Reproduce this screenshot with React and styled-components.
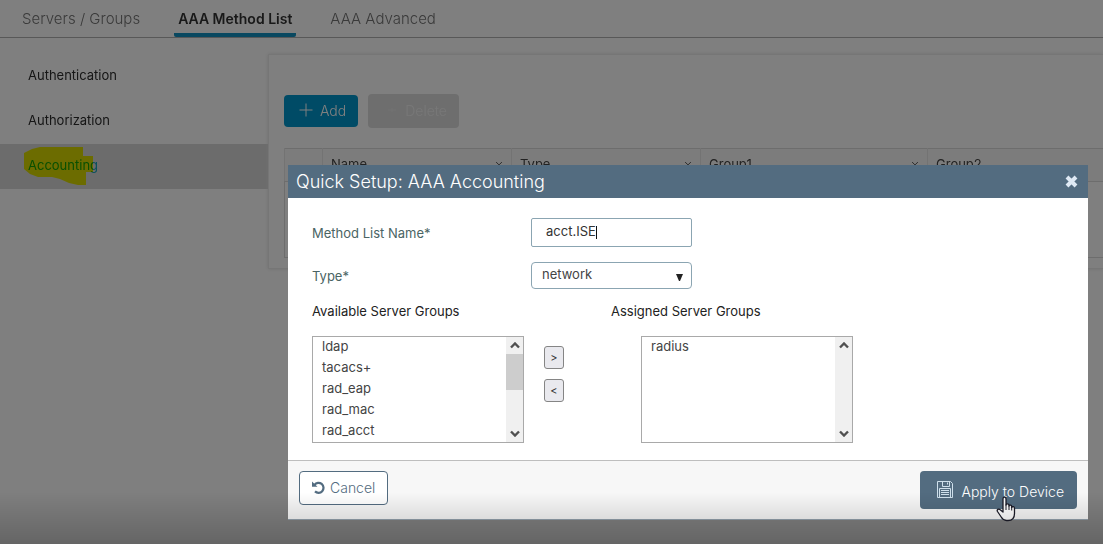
import React from "react";
import styled, { createGlobalStyle } from "styled-components";

const GlobalStyle = createGlobalStyle`
  * { box-sizing: border-box; }
  body {
    margin: 0;
    background: #fff;
    color: #222;
    font-family: Inter, "Liberation Sans", sans-serif;
    font-size: 13px;
    overflow: hidden;
  }
  button, input, select { font: inherit; }
`;

const Page = styled.div`
  min-height: 100vh;
`;

const Tabs = styled.nav`
  display: flex;
  gap: 30px;
  height: 38px;
  padding-left: 18px;
  border-bottom: 1px solid #b0b0b0;
`;

const Tab = styled.a`
  height: 37px;
  padding: 0 4px;
  border-bottom: 4px solid ${(p) => (p.$active ? "#1290c0" : "transparent")};
  border-radius: 2px;
  color: ${(p) => (p.$active ? "#333" : "#747474")};
  font-size: ${(p) => (p.$active ? 14 : 15)}px;
  font-weight: ${(p) => (p.$active ? 600 : 300)};
  line-height: 37px;
  text-decoration: none;
  white-space: nowrap;
`;

const Content = styled.div`
  display: flex;
  padding-top: 16px;
`;

const SideMenu = styled.nav`
  flex: 0 0 268px;
`;

const SideLink = styled.a`
  display: flex;
  align-items: center;
  height: 45px;
  padding: 0 0 3px 28px;
  background: ${(p) => (p.$active ? "#d8d8d8" : "transparent")};
  color: ${(p) => (p.$active ? "#12a0b8" : "#2c2c2c")};
  text-decoration: none;
`;

const Marked = styled.span`
  position: relative;
`;

const Highlight = styled.svg`
  position: absolute;
  left: -4px;
  top: -10px;
  mix-blend-mode: multiply;
`;

const Card = styled.main`
  flex: 1;
  min-width: 0;
  height: 215px;
  padding: 39px 0 0 15px;
  border: 1px solid #ececec;
  border-right: 0;
  box-shadow: 0 0 4px #e0e0e0;
`;

const Toolbar = styled.div`
  display: flex;
  align-items: center;
  gap: 10px;
  height: 34px;
  margin-bottom: 20px;
`;

const ToolButton = styled.button`
  display: flex;
  align-items: center;
  gap: 7px;
  height: ${(p) => (p.disabled ? 34 : 32)}px;
  padding: 0 12px 2px ${(p) => (p.disabled ? 18 : 15)}px;
  border: 0;
  border-radius: 4px;
  background: ${(p) => (p.disabled ? "#dcdcdc" : "#0096cc")};
  color: ${(p) => (p.disabled ? "#efefef" : "#fff")};
  font-size: 14px;
  font-weight: 300;
`;

const Table = styled.table`
  width: 100%;
  table-layout: fixed;
  border-collapse: collapse;
  border: 1px solid #dadada;
  border-right: 0;
`;

const HeadCell = styled.th`
  width: ${(p) => p.$width || "auto"};
  height: 33px;
  padding: 0 8px;
  border-left: 1px solid #e6e6e6;
  border-bottom: 1px solid #dadada;
  background: #f8f8f8;
  color: #444;
  font-weight: 400;
  text-align: left;
`;

const HeadLabel = styled.span`
  display: flex;
  align-items: center;
  justify-content: space-between;
  line-height: 16px;
  padding-bottom: 3px;
`;

const EmptyCell = styled.td`
  height: 76px;
`;

const Backdrop = styled.div`
  position: fixed;
  inset: 0;
  padding: 165px 15px 0 288px;
  background: rgba(0, 0, 0, 0.5);
`;

const Shade = styled.div`
  position: fixed;
  inset: auto 0 0;
  height: 52px;
  background: linear-gradient(transparent, rgba(0, 0, 0, 0.2));
  pointer-events: none;
`;

const Dialog = styled.section`
  position: relative;
  background: #fff;
`;

const DialogHeader = styled.header`
  display: flex;
  align-items: center;
  justify-content: space-between;
  height: 33px;
  padding: 0 10px 0 8px;
  background: #536c80;
  color: #fff;
`;

const Title = styled.h2`
  margin: 0;
  font-size: 18px;
  font-weight: 300;
`;

const CloseButton = styled.button`
  display: flex;
  padding: 0;
  border: 0;
  background: none;
  color: #dfe9f4;
`;

const Form = styled.form`
  padding: 20px 24px 17px;
`;

const FieldRow = styled.div`
  display: grid;
  grid-template-columns: 219px 161px;
  align-items: center;
  margin-bottom: 15px;
`;

const FieldLabel = styled.label`
  color: #4a6464;
`;

const Control = styled.div`
  position: relative;
  display: flex;
`;

const TextInput = styled.input`
  width: 100%;
  height: 29px;
  padding: 0 14px 3px;
  border: 1px solid #8ba5b2;
  border-radius: 2px;
  outline: 0;
  background: #fff;
  color: #333;
`;

const Caret = styled.span`
  position: absolute;
  left: 65px;
  top: 8px;
  width: 1px;
  height: 13px;
  background: #111;
`;

const Dropdown = styled.select`
  width: 100%;
  height: 27px;
  padding: 0 24px 3px 10px;
  border: 1px solid #8ba5b2;
  border-radius: 4px;
  appearance: none;
  background: #fff;
  color: #444;
`;

const DropdownArrow = styled.svg`
  position: absolute;
  right: 9px;
  top: 12px;
  pointer-events: none;
`;

const Headings = styled.div`
  display: grid;
  grid-template-columns: 299px 1fr;
  margin: -1px 0 17px;
  line-height: 16px;
`;

const Transfer = styled.div`
  display: flex;
`;

const ListFrame = styled.div`
  display: flex;
  width: 212px;
  height: 107px;
  border: 1px solid #a9a9a9;
`;

const ListBox = styled.select`
  flex: 1;
  min-width: 0;
  height: 105px;
  padding: 0;
  border: 0;
  outline: 0;
  background: #fff;
  color: #444;
  overflow: hidden;
  scrollbar-width: none;

  option {
    height: 21px;
    min-height: 21px;
    padding: 1px 9px 0;
    line-height: 20px;
  }
`;

const ScrollBar = styled.div`
  display: flex;
  flex-direction: column;
  align-items: center;
  width: 17px;
  background: #f0f0f0;
`;

const ScrollEnd = styled.span`
  display: flex;
  align-items: center;
  justify-content: center;
  height: 17px;
`;

const ScrollTrack = styled.div`
  flex: 1;
  align-self: stretch;
`;

const ScrollThumb = styled.div`
  height: 36px;
  background: #cdcdcd;
`;

const MoveButtons = styled.div`
  display: flex;
  flex-direction: column;
  gap: 10px;
  margin: 10px 77px 0 20px;
`;

const MoveButton = styled.button`
  width: 20px;
  height: 23px;
  padding: 0;
  border: 1px solid #858585;
  border-radius: 3px;
  background: #e9e9ee;
  color: #333;
  font-size: 11px;
  line-height: 20px;
`;

const DialogFooter = styled.footer`
  display: flex;
  align-items: flex-start;
  justify-content: space-between;
  height: 60px;
  padding: 10px 11px 0;
  border-top: 1px solid #bebebe;
  border-bottom: 1px solid #93a0ac;
  background: #f7f7f7;
`;

const CancelButton = styled.button`
  display: flex;
  align-items: center;
  gap: 5px;
  height: 34px;
  padding: 0 12px 2px;
  border: 1px solid #536c80;
  border-radius: 4px;
  background: #fff;
  color: #536c80;
  font-size: 14px;
  font-weight: 300;
`;

const ApplyButton = styled.button`
  position: relative;
  display: flex;
  align-items: center;
  gap: 7px;
  height: 38px;
  padding: 0 13px 2px 16px;
  border: 0;
  border-radius: 4px;
  background: #536c80;
  color: #fff;
  font-size: 14px;
  font-weight: 300;
`;

const ApplyText = styled.span`
  padding-top: 4px;
`;

const Pointer = styled.svg`
  position: absolute;
  left: 76px;
  top: 25px;
`;

function Chevron({ up, wide }) {
  return (
    <svg width={wide ? 10 : 8} height={wide ? 7 : 5} viewBox="0 0 10 7" fill="none" stroke={wide ? "#505050" : "#555"} strokeWidth={wide ? 2.4 : 1.4} aria-hidden="true">
      <path d={up ? "M1 5.5 5 1.5 9 5.5" : "M1 1.5 5 5.5 9 1.5"} />
    </svg>
  );
}

function GroupList({ label, groups, thumb }) {
  return (
    <ListFrame>
      <ListBox size={5} aria-labelledby={label}>
        {groups.map((g) => (
          <option key={g}>{g}</option>
        ))}
      </ListBox>
      <ScrollBar aria-hidden="true">
        <ScrollEnd><Chevron up wide /></ScrollEnd>
        <ScrollTrack>{thumb && <ScrollThumb />}</ScrollTrack>
        <ScrollEnd><Chevron wide /></ScrollEnd>
      </ScrollBar>
    </ListFrame>
  );
}

const columns = [
  { name: "Name", width: "189px" },
  { name: "Type", width: "189px" },
  { name: "Group1", width: "227px" },
  { name: "Group2" },
];

export default function App() {
  return (
    <>
      <GlobalStyle />
      <Page>
        <Tabs>
          <Tab href="#servers">Servers / Groups</Tab>
          <Tab href="#methods" $active>AAA Method List</Tab>
          <Tab href="#advanced">AAA Advanced</Tab>
        </Tabs>
        <Content>
          <SideMenu>
            <SideLink href="#authentication">Authentication</SideLink>
            <SideLink href="#authorization">Authorization</SideLink>
            <SideLink href="#accounting" $active>
              <Marked>
                Accounting
                <Highlight width="70" height="39" viewBox="0 0 70 39" aria-hidden="true">
                  <path d="M0 6 8 2 16 0H59V9H69V25H62V38H54L45 36 36 32 28 30H14L6 27 0 22Z" fill="#ffff00" />
                </Highlight>
              </Marked>
            </SideLink>
          </SideMenu>
          <Card>
            <Toolbar>
              <ToolButton type="button">
                <svg width="14" height="14" viewBox="0 0 14 14" stroke="currentColor" aria-hidden="true">
                  <path d="M7 .5v13M.5 7h13" />
                </svg>
                Add
              </ToolButton>
              <ToolButton type="button" disabled>
                <svg width="12" height="12" viewBox="0 0 12 12" stroke="#e4e4e4" fill="none" aria-hidden="true">
                  <path d="M2 6h8M6 4v4" />
                </svg>
                Delete
              </ToolButton>
            </Toolbar>
            <Table>
              <thead>
                <tr>
                  <HeadCell $width="38px" />
                  {columns.map((c) => (
                    <HeadCell key={c.name} $width={c.width}>
                      <HeadLabel>
                        {c.name}
                        {c.width && <Chevron />}
                      </HeadLabel>
                    </HeadCell>
                  ))}
                </tr>
              </thead>
              <tbody>
                <tr><EmptyCell colSpan={5} /></tr>
              </tbody>
            </Table>
          </Card>
        </Content>
      </Page>

      <Backdrop>
        <Dialog role="dialog" aria-labelledby="dialog-title">
          <DialogHeader>
            <Title id="dialog-title">Quick Setup: AAA Accounting</Title>
            <CloseButton type="button" aria-label="Close">
              <svg width="13" height="13" viewBox="0 0 13 13" stroke="currentColor" strokeWidth="4" aria-hidden="true">
                <path d="M2 2 11 11M11 2 2 11" />
              </svg>
            </CloseButton>
          </DialogHeader>
          <Form>
            <FieldRow>
              <FieldLabel htmlFor="method-name">Method List Name*</FieldLabel>
              <Control>
                <TextInput id="method-name" type="text" defaultValue="acct.ISE" />
                <Caret />
              </Control>
            </FieldRow>
            <FieldRow>
              <FieldLabel htmlFor="method-type">Type*</FieldLabel>
              <Control>
                <Dropdown id="method-type" defaultValue="network">
                  <option>network</option>
                </Dropdown>
                <DropdownArrow width="7" height="7" viewBox="0 0 7 7" aria-hidden="true">
                  <path d="M0 0H7L4 7H3Z" fill="#222" />
                </DropdownArrow>
              </Control>
            </FieldRow>
            <Headings>
              <span id="available">Available Server Groups</span>
              <span id="assigned">Assigned Server Groups</span>
            </Headings>
            <Transfer>
              <GroupList label="available" groups={["ldap", "tacacs+", "rad_eap", "rad_mac", "rad_acct"]} thumb />
              <MoveButtons>
                <MoveButton type="button">&gt;</MoveButton>
                <MoveButton type="button">&lt;</MoveButton>
              </MoveButtons>
              <GroupList label="assigned" groups={["radius"]} />
            </Transfer>
          </Form>
          <DialogFooter>
            <CancelButton type="button">
              <svg width="13" height="13" viewBox="0 0 13 13" fill="none" stroke="currentColor" strokeWidth="2.2" aria-hidden="true">
                <path d="M2.500 3.800A5 5 0 1 1 3 10.400" />
                <path d="M0 .5V5.800H5.500Z" fill="currentColor" stroke="none" />
              </svg>
              Cancel
            </CancelButton>
            <ApplyButton type="button">
              <svg width="18" height="19" viewBox="0 0 18 19" fill="none" stroke="#cfe0ec" aria-hidden="true">
                <path d="M1.5 1.5H14.5L16.5 3.5V17.5H1.5ZM6.5 1.5V6.5H13.5V1.5M11.5 2.5V4.5M3.5 17V8.5H14.5V17M5 10.5H13M5 12.5H13M5 14.5H13" />
              </svg>
              <ApplyText>Apply to Device</ApplyText>
              <Pointer width="20" height="26" viewBox="0 0 20 26" aria-hidden="true">
                <path d="M7 14V3C7 .6 10 .6 10 3V9C10 7.4 13 7.4 13 9.2V10C13.2 8.6 15.7 8.8 15.7 10.4V11.4C16.2 10.2 18.5 10.4 18.5 12.4V17.5C18.5 22 16 24.5 12 24.5H10.5C8 24.5 6.500 23.300 5.200 21L1.500 15.500C.5 13.800 2.600 12.200 4.200 13.700L7 16Z" fill="#fff" stroke="#1c1c28" strokeWidth="1.3" strokeLinejoin="round" />
                <path d="M10 8.500V14M13 9.500V14M15.700 11V14.500" stroke="#1c1c28" strokeWidth="1" />
              </Pointer>
            </ApplyButton>
          </DialogFooter>
        </Dialog>
      </Backdrop>
      <Shade />
    </>
  );
}
